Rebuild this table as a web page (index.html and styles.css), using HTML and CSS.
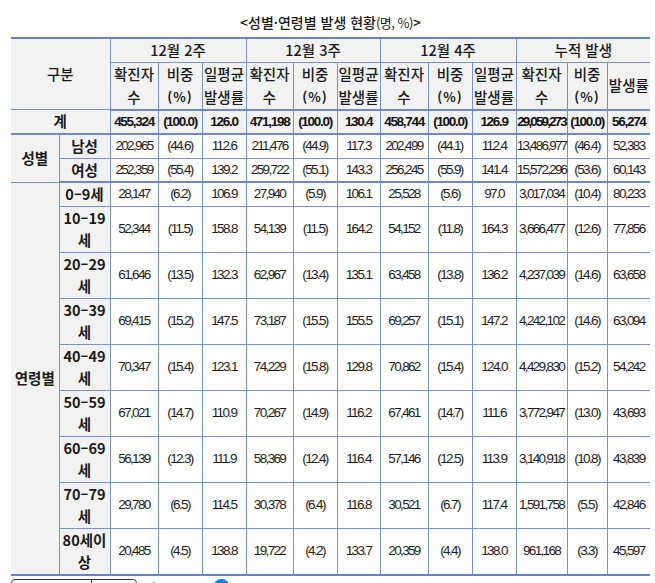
FILE: index.html
```html
<!DOCTYPE html>
<html lang="ko">
<head>
<meta charset="utf-8">
<title>성별·연령별 발생 현황</title>
<link rel="stylesheet" href="styles.css">
</head>
<body>
<div class="page">
  <p class="title">&lt;성별·연령별 발생 현황<span class="unit">(명, %)</span>&gt;</p>
  <table class="stats">
    <colgroup>
      <col class="c-grp"><col class="c-sub">
      <col class="c-a"><col class="c-b"><col class="c-b">
      <col class="c-a2"><col class="c-b"><col class="c-c">
      <col class="c-a"><col class="c-b"><col class="c-b">
      <col class="c-d"><col class="c-e"><col class="c-f">
    </colgroup>
    <thead>
      <tr>
        <th class="edge" colspan="2" rowspan="2">구분</th>
        <th colspan="3">12월 2주</th>
        <th colspan="3">12월 3주</th>
        <th colspan="3">12월 4주</th>
        <th colspan="3">누적 발생</th>
      </tr>
      <tr class="h2">
        <th>확진자<br>수</th><th>비중<br><span class="pct">(%)</span></th><th>일평균<br>발생률</th>
        <th>확진자<br>수</th><th>비중<br><span class="pct">(%)</span></th><th>일평균<br>발생률</th>
        <th>확진자<br>수</th><th>비중<br><span class="pct">(%)</span></th><th>일평균<br>발생률</th>
        <th>확진자<br>수</th><th>비중<br><span class="pct">(%)</span></th><th>발생률</th>
      </tr>
    </thead>
    <tbody>
      <tr class="total">
        <th class="edge" colspan="2">계</th>
        <td>455,324</td><td>(100.0)</td><td>126.0</td>
        <td>471,198</td><td>(100.0)</td><td>130.4</td>
        <td>458,744</td><td>(100.0)</td><td>126.9</td>
        <td class="long">29,059,273</td><td>(100.0)</td><td>56,274</td>
      </tr>
      <tr>
        <th class="edge grp" rowspan="2">성별</th>
        <th class="sub">남성</th>
        <td>202,965</td><td>(44.6)</td><td>112.6</td>
        <td>211,476</td><td>(44.9)</td><td>117.3</td>
        <td>202,499</td><td>(44.1)</td><td>112.4</td>
        <td class="long">13,486,977</td><td>(46.4)</td><td>52,383</td>
      </tr>
      <tr class="grp-end">
        <th class="sub">여성</th>
        <td>252,359</td><td>(55.4)</td><td>139.2</td>
        <td>259,722</td><td>(55.1)</td><td>143.3</td>
        <td>256,245</td><td>(55.9)</td><td>141.4</td>
        <td class="long">15,572,296</td><td>(53.6)</td><td>60,143</td>
      </tr>
      <tr>
        <th class="edge grp" rowspan="9">연령별</th>
        <th class="sub">0–9세</th>
        <td>28,147</td><td>(6.2)</td><td>106.9</td>
        <td>27,940</td><td>(5.9)</td><td>106.1</td>
        <td>25,528</td><td>(5.6)</td><td>97.0</td>
        <td>3,017,034</td><td>(10.4)</td><td>80,233</td>
      </tr>
      <tr>
        <th class="sub">10–19<br>세</th>
        <td>52,344</td><td>(11.5)</td><td>158.8</td>
        <td>54,139</td><td>(11.5)</td><td>164.2</td>
        <td>54,152</td><td>(11.8)</td><td>164.3</td>
        <td>3,666,477</td><td>(12.6)</td><td>77,856</td>
      </tr>
      <tr>
        <th class="sub">20–29<br>세</th>
        <td>61,646</td><td>(13.5)</td><td>132.3</td>
        <td>62,967</td><td>(13.4)</td><td>135.1</td>
        <td>63,458</td><td>(13.8)</td><td>136.2</td>
        <td>4,237,039</td><td>(14.6)</td><td>63,658</td>
      </tr>
      <tr>
        <th class="sub">30–39<br>세</th>
        <td>69,415</td><td>(15.2)</td><td>147.5</td>
        <td>73,187</td><td>(15.5)</td><td>155.5</td>
        <td>69,257</td><td>(15.1)</td><td>147.2</td>
        <td>4,242,102</td><td>(14.6)</td><td>63,094</td>
      </tr>
      <tr>
        <th class="sub">40–49<br>세</th>
        <td>70,347</td><td>(15.4)</td><td>123.1</td>
        <td>74,229</td><td>(15.8)</td><td>129.8</td>
        <td>70,862</td><td>(15.4)</td><td>124.0</td>
        <td>4,429,830</td><td>(15.2)</td><td>54,242</td>
      </tr>
      <tr>
        <th class="sub">50–59<br>세</th>
        <td>67,021</td><td>(14.7)</td><td>110.9</td>
        <td>70,267</td><td>(14.9)</td><td>116.2</td>
        <td>67,461</td><td>(14.7)</td><td>111.6</td>
        <td>3,772,947</td><td>(13.0)</td><td>43,693</td>
      </tr>
      <tr>
        <th class="sub">60–69<br>세</th>
        <td>56,139</td><td>(12.3)</td><td>111.9</td>
        <td>58,369</td><td>(12.4)</td><td>116.4</td>
        <td>57,146</td><td>(12.5)</td><td>113.9</td>
        <td>3,140,918</td><td>(10.8)</td><td>43,839</td>
      </tr>
      <tr>
        <th class="sub">70–79<br>세</th>
        <td>29,780</td><td>(6.5)</td><td>114.5</td>
        <td>30,378</td><td>(6.4)</td><td>116.8</td>
        <td>30,521</td><td>(6.7)</td><td>117.4</td>
        <td>1,591,758</td><td>(5.5)</td><td>42,846</td>
      </tr>
      <tr>
        <th class="sub">80세이<br>상</th>
        <td>20,485</td><td>(4.5)</td><td>138.8</td>
        <td>19,722</td><td>(4.2)</td><td>133.7</td>
        <td>20,359</td><td>(4.4)</td><td>138.0</td>
        <td>961,168</td><td>(3.3)</td><td>45,597</td>
      </tr>
    </tbody>
  </table>
  <div class="footer">
    <div class="ctrl"><span class="ctrl-a"></span><span class="ctrl-b"></span></div>
    <span class="leaf"></span>
    <span class="dot"></span>
  </div>
</div>
</body>
</html>
```

FILE: styles.css
```css
html, body {
  margin: 0;
  padding: 0;
  background: #ffffff;
}

body {
  font-family: "Noto Sans CJK KR", "Liberation Sans", sans-serif;
  color: #1e1e1e;
}

.page {
  padding: 12px 0 0 11px;
}

.title {
  width: 639px;
  margin: 0 0 4px 0;
  text-align: center;
  font-size: 14px;
  font-weight: 500;
  line-height: 20px;
  color: #1a1a1a;
}

.title .unit {
  font-size: 13px;
  font-weight: 400;
  letter-spacing: -0.5px;
}

.stats {
  width: 639px;
  border-collapse: collapse;
  table-layout: fixed;
  border-top: 2px solid #6283d3;
  border-bottom: 2px solid #6283d3;
}

.c-grp { width: 48px; }
.c-sub { width: 51px; }
.c-a { width: 48px; }
.c-a2 { width: 47px; }
.c-b { width: 44px; }
.c-c { width: 43px; }
.c-d { width: 51px; }
.c-e { width: 40px; }
.c-f { width: 43px; }

.stats th,
.stats td {
  border: 1px solid #7591d8;
  padding: 0;
  text-align: center;
  vertical-align: middle;
  line-height: 22.5px;
  white-space: nowrap;
  overflow: visible;
}

.stats th:last-child,
.stats td:last-child {
  border-right: none;
}

.stats .edge {
  border-left: none;
}

.stats th {
  background: #f2f2f2;
  font-size: 14.5px;
  font-weight: 500;
  color: #1a1a1a;
}

.stats thead th .pct {
  font-weight: 700;
  font-size: 13px;
  letter-spacing: 1px;
}

.stats thead tr.h2 th {
  border-bottom: 2px solid #6a88d4;
}

.stats tbody th {
  font-weight: 700;
}

.stats tbody td {
  font-family: "Liberation Sans", "Noto Sans CJK KR", sans-serif;
  font-size: 13.5px;
  letter-spacing: -1.65px;
  color: #1c1c1c;
}

.stats tbody td.long {
  letter-spacing: -1.8px;
}

.stats tr.total th,
.stats tr.total td {
  background: #f2f2f2;
  border-bottom: 2px solid #6a88d4;
}

.stats tr.total td {
  font-weight: 700;
  letter-spacing: -1.3px;
  color: #111111;
}

.stats tr.total td.long {
  letter-spacing: -1.9px;
}

.stats tr.grp-end th,
.stats tr.grp-end td {
  border-bottom: 2px solid #6a88d4;
}

.stats .grp,
.stats .sub {
  font-size: 14.5px;
}

.footer {
  display: flex;
  align-items: flex-start;
  margin-top: 3px;
  height: 30px;
}

.ctrl {
  display: flex;
  width: 124px;
  height: 22px;
  border: 1px solid #3a3a3a;
  border-radius: 4px;
}

.ctrl-a {
  width: 79px;
  border-right: 1px solid #3a3a3a;
}

.ctrl-b {
  flex: 1;
}

.leaf {
  width: 4px;
  height: 6px;
  margin: 3px 0 0 15px;
  background: #74c043;
  border-radius: 2px 2px 0 0;
}

.dot {
  width: 17px;
  height: 17px;
  margin: 0 0 0 57px;
  background: #1b7fe0;
  border-radius: 50%;
}
```
